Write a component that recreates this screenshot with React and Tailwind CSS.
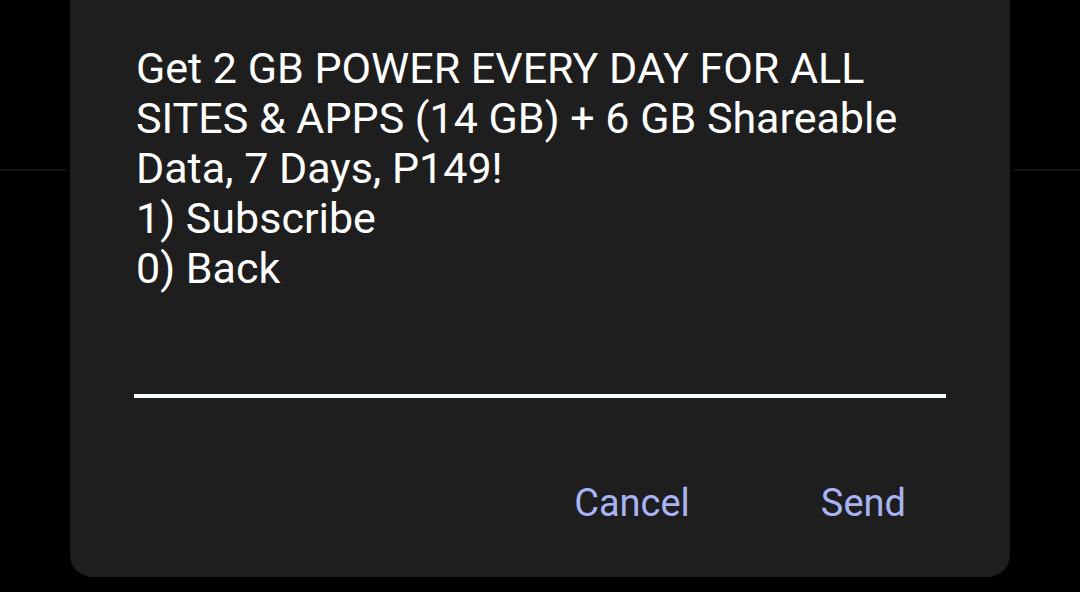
import React from "react";

const MESSAGE = [
  "Get 2 GB POWER EVERY DAY FOR ALL SITES & APPS (14 GB) + 6 GB Shareable Data, 7 Days, P149!",
  "1) Subscribe",
  "0) Back",
];

const SideRule = () => (
  <div className="flex-1">
    <div className="h-[171px] border-b-2 border-[#161616]" />
  </div>
);

export default function App() {
  return (
    <div
      className="flex h-[592px] w-[1080px] overflow-hidden bg-black"
      style={{ fontFamily: "Roboto, 'Noto Sans', sans-serif" }}
    >
      <div className="w-[66px]">
        <div className="h-[171px] border-b-2 border-[#161616]" />
      </div>
      <div className="ml-[4px] mr-[4px] -mt-[20px] flex h-[597px] w-[940px] flex-col rounded-[22px] bg-[#1e1e1e] px-[64px]">
        <div className="pt-[63px] pl-[2px] text-[43px] leading-[50px] text-white">
          {MESSAGE.map((line) => (
            <p key={line}>{line}</p>
          ))}
        </div>
        <div className="mt-[101px] h-[4px] w-full bg-[#f4fbf8]" />
        <div className="mt-[81px] flex justify-end gap-[131px] pr-[40px] text-[38px] leading-[48px] text-[#a7b3f2]">
          <button type="button">Cancel</button>
          <button type="button">Send</button>
        </div>
      </div>
      <SideRule />
    </div>
  );
}
